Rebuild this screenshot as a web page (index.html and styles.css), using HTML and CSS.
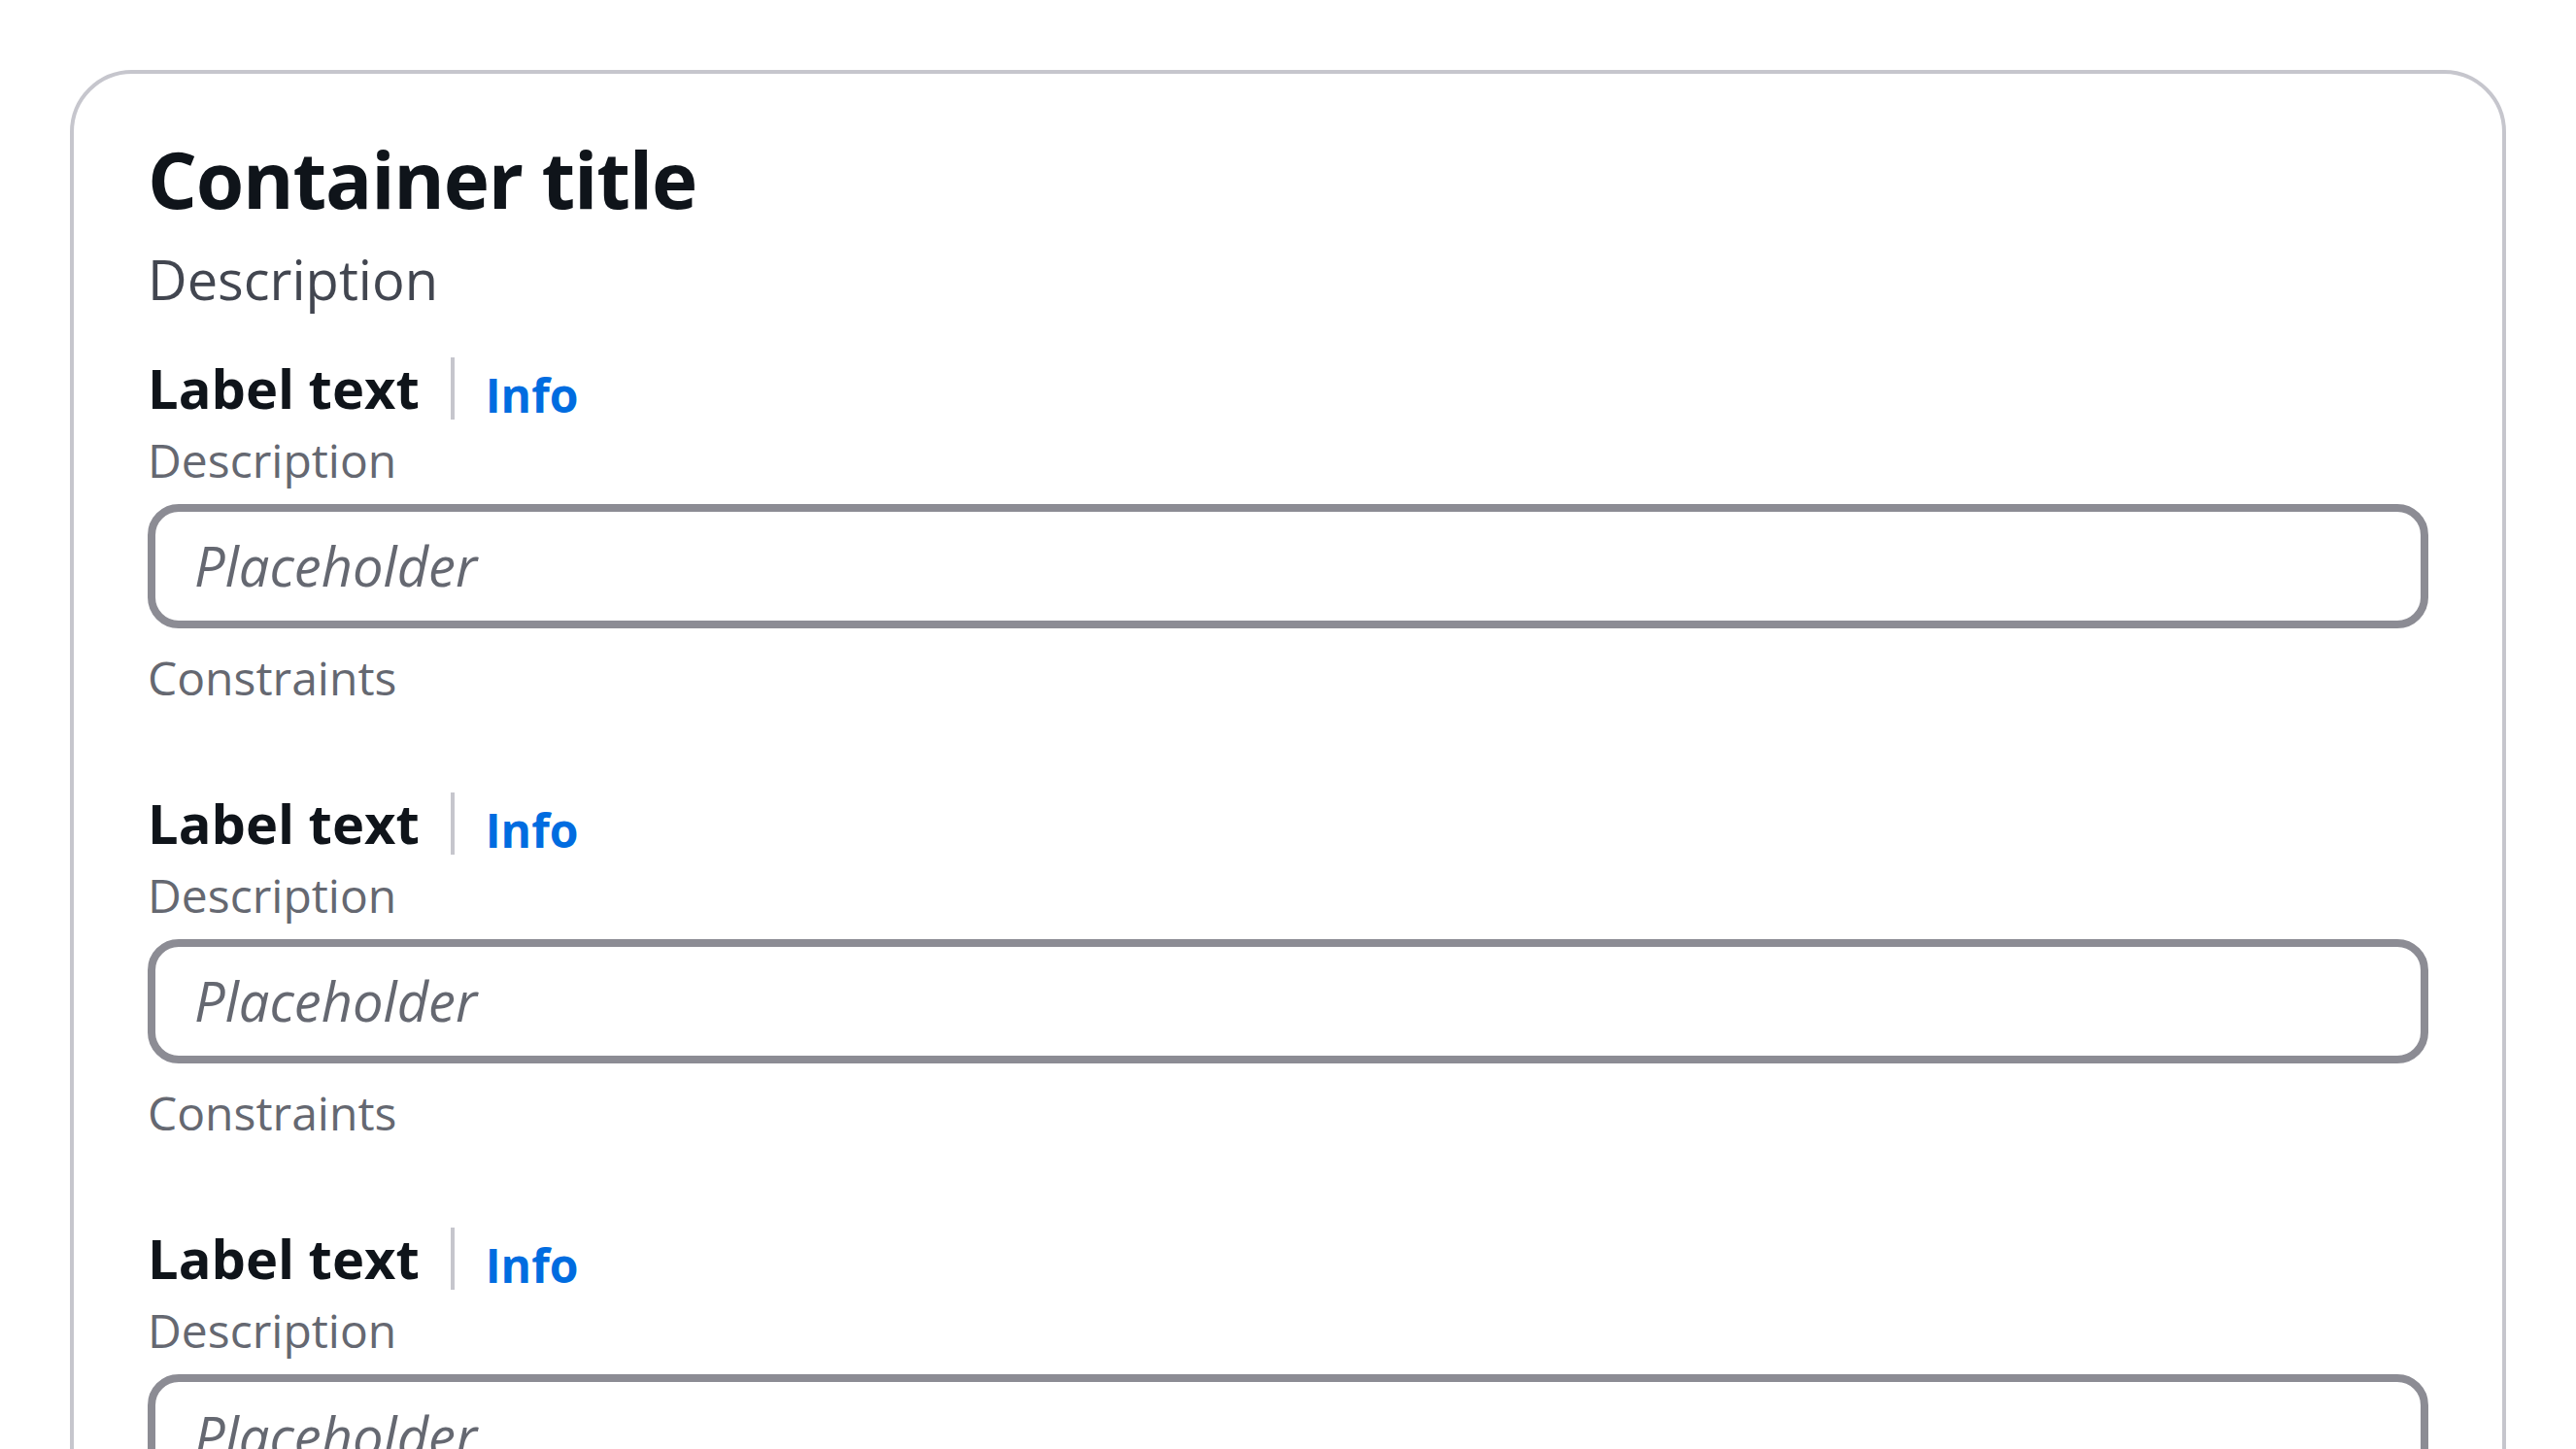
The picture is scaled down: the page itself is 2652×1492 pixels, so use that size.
FILE: index.html
```html
<!DOCTYPE html>
<html lang="en">
<head>
  <meta charset="UTF-8" />
  <meta name="viewport" content="width=device-width, initial-scale=1" />
  <title>Container form</title>
  <link rel="stylesheet" href="styles.css">
</head>
<body>

  <div class="container">
    <div class="container-header">
      <h2 class="container-title">Container title</h2>
      <p class="container-description">Description</p>
    </div>

    <div class="field-list">
      <!-- Field 1 -->
      <div class="field">
        <div class="label-row">
          <label class="label-text" for="field1">Label text</label>
          <span class="label-divider"></span>
          <a class="info-link" href="#">Info</a>
        </div>
        <div class="field-description">Description</div>
        <input class="text-input" type="text" id="field1" placeholder="Placeholder" />
        <div class="field-constraint">Constraints</div>
      </div>

      <!-- Field 2 -->
      <div class="field">
        <div class="label-row">
          <label class="label-text" for="field2">Label text</label>
          <span class="label-divider"></span>
          <a class="info-link" href="#">Info</a>
        </div>
        <div class="field-description">Description</div>
        <input class="text-input" type="text" id="field2" placeholder="Placeholder" />
        <div class="field-constraint">Constraints</div>
      </div>

      <!-- Field 3 -->
      <div class="field">
        <div class="label-row">
          <label class="label-text" for="field3">Label text</label>
          <span class="label-divider"></span>
          <a class="info-link" href="#">Info</a>
        </div>
        <div class="field-description">Description</div>
        <input class="text-input" type="text" id="field3" placeholder="Placeholder" />
        <div class="field-constraint">Constraints</div>
      </div>
    </div>
  </div>

</body>
</html>
```

FILE: styles.css
```css
* {
  box-sizing: border-box;
}
body {
  margin: 0;
  padding: 72px;
  background: #ffffff;
  font-family: "Open Sans", "Noto Sans", sans-serif;
  color: #0f141a;
}
.container {
  border: 4px solid #c6c6cd;
  border-radius: 64px;
  padding: 60px 76px 80px 76px;
  background: #ffffff;
}
.container-header {
  display: flex;
  flex-direction: column;
}
.container-title {
  margin: 0;
  font-size: 80px;
  line-height: 96px;
  font-weight: 700;
  letter-spacing: -1.2px;
  color: #0f141a;
}
.container-description {
  margin: 15px 0 0 0;
  font-size: 56px;
  line-height: 80px;
  color: #424650;
}
.field-list {
  display: flex;
  flex-direction: column;
  gap: 77px;
  margin-top: 32px;
}
.field {
  display: flex;
  flex-direction: column;
}
.label-row {
  display: flex;
  align-items: flex-start;
  height: 81px;
}
.label-text {
  font-size: 56px;
  line-height: 80px;
  font-weight: 700;
  color: #0f141a;
}
.label-divider {
  width: 4px;
  height: 64px;
  margin: 9px 32px 0 32px;
  background: #c6c6cd;
}
.info-link {
  margin-top: 16px;
  font-size: 48px;
  line-height: 64px;
  font-weight: 700;
  color: #006ce0;
  text-decoration: none;
}
.field-description,
.field-constraint {
  font-size: 48px;
  line-height: 64px;
  color: #656871;
}
.field-description {
  margin-top: 2px;
}
.text-input {
  width: 100%;
  height: 128px;
  margin: 13px 0 19px 0;
  padding: 15px 40px 17px 40px;
  border: 8px solid #8c8c94;
  border-radius: 32px;
  font-family: "Open Sans", "Noto Sans", sans-serif;
  font-size: 56px;
  line-height: 80px;
  color: #0f141a;
  background: #ffffff;
  outline: none;
}
.text-input::placeholder {
  color: #656871;
  font-style: italic;
  opacity: 1;
}
```
